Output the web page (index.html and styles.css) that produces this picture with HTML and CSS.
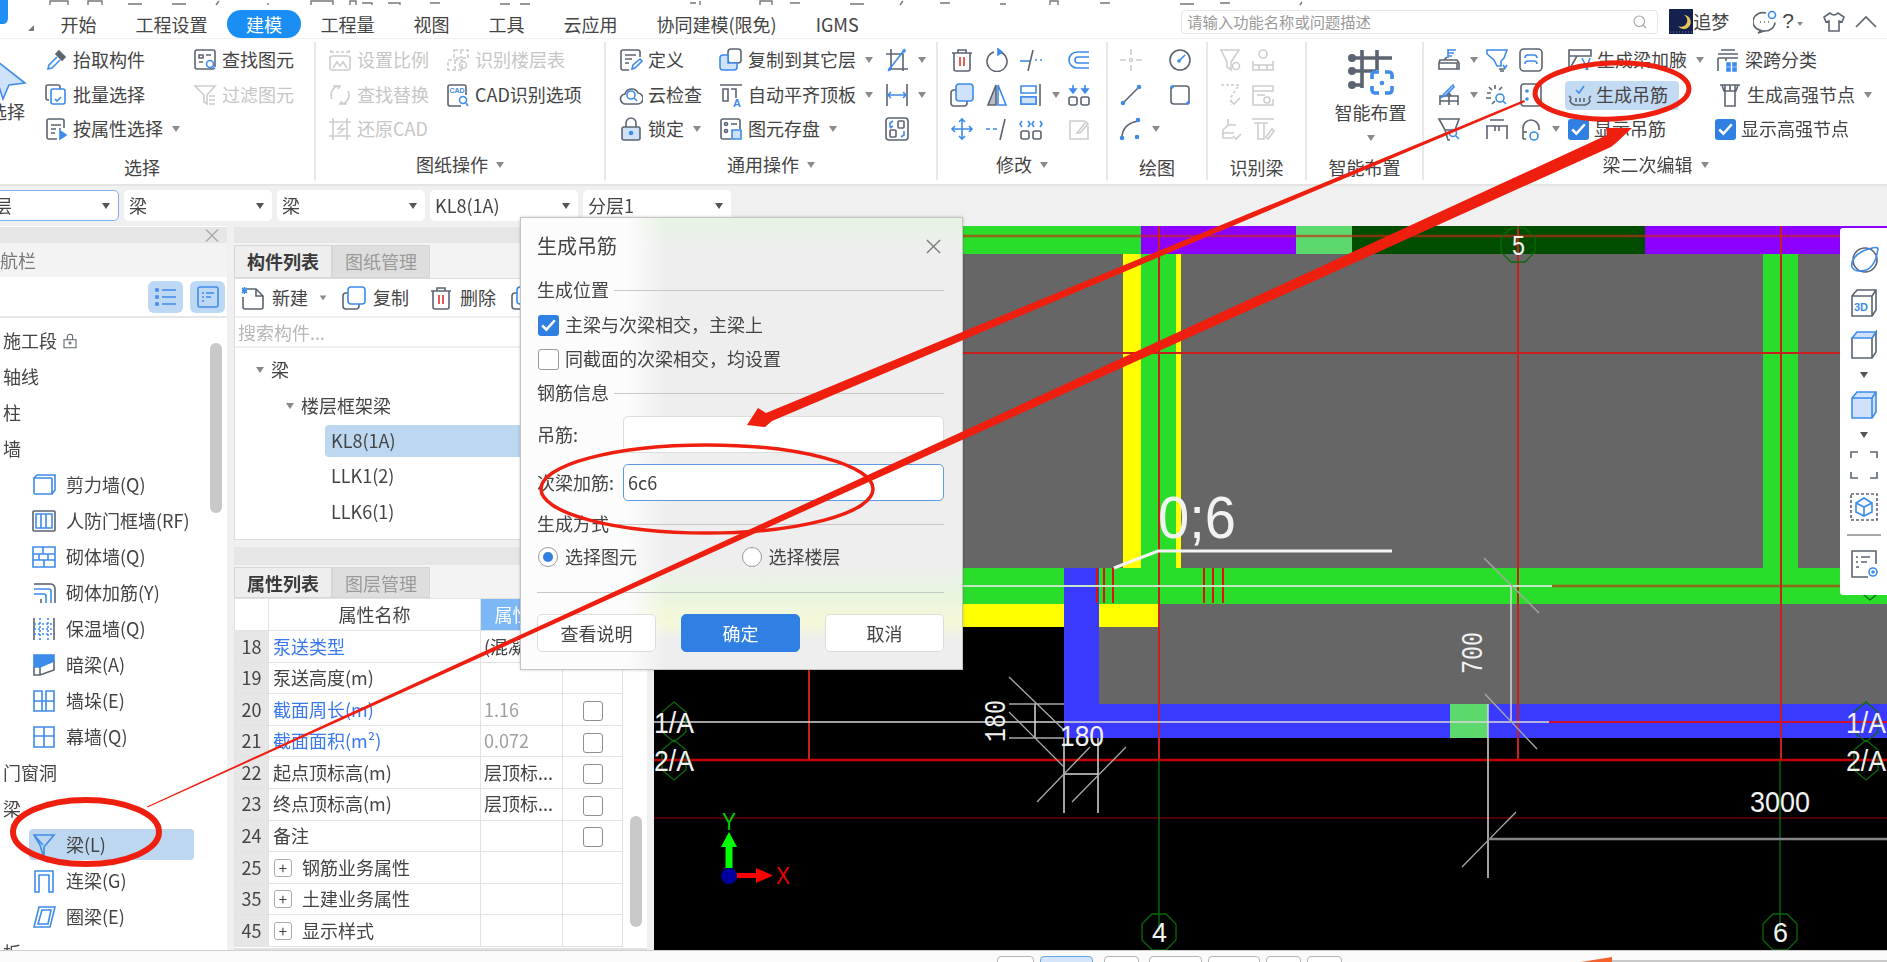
FILE: index.html
```html
<!DOCTYPE html>
<html lang="zh-CN">
<head>
    <meta charset="UTF-8">
    <meta name="viewport" content="width=device-width, initial-scale=1.0">
    <title>生成吊筋</title>
    <link rel="stylesheet" href="styles.css">
</head>
<body>
<div class="app">

    <!-- 标题栏（被截掉，只剩一点） -->
    <svg class="top-bits" viewBox="0 0 1887 6">
        <path d="M50 5V1h18v4M88 5V1h14v4M128 4h14M172 4h14M216 5l3-4M268 3v2M311 5V1h22v4M350 5V1h6v4M362 3h10v2M388 3h12v2M430 3h10M500 4h10M520 4h10M690 3h6M700 5V1M760 5V1h12v4M790 3h10M850 4h14M900 5l3-4M940 3h10M1000 4h6M1050 5V1h8v4M1100 3h10M1180 4h14M1220 3h10M1300 5l2-3"/>
    </svg>

    <div class="tabs">
        <svg class="logo" viewBox="0 0 8 24"><path d="M0 0h8v18q0 5-4 6H0z"/></svg>
        <i class="tab-corner"></i>
        <span class="tab">开始</span>
        <span class="tab">工程设置</span>
        <span class="tab active">建模</span>
        <span class="tab">工程量</span>
        <span class="tab">视图</span>
        <span class="tab">工具</span>
        <span class="tab">云应用</span>
        <span class="tab">协同建模(限免)</span>
        <span class="tab">IGMS</span>
        <div class="search">
            <span>请输入功能名称或问题描述</span>
            <svg class="ic search-ic" viewBox="0 0 24 24"><circle cx="11" cy="11" r="7"/><path d="M16 16l4 4"/></svg>
        </div>
        <svg class="avatar" viewBox="0 0 24 25"><rect width="24" height="25" fill="#14204e"/><path d="M15 6a7 7 0 1 1-6 11 6 6 0 0 0 6-11z" fill="#e8c65a"/><path d="M1 23h22" stroke="#6a7ab0" stroke-dasharray="1 2"/></svg>
        <span class="user">追梦</span>
        <svg class="ic top-ic" viewBox="0 0 24 24"><path d="M13 3.100A10 9 0 1 0 8 20.500L5 23l6-2.100a10 9 0 0 0 11-8.400"/><path d="M7 12h1M11 12h1M15 12h1"/><circle class="b" cx="19" cy="5" r="3.500"/></svg>
        <span class="help">?</span><i class="caret small"></i>
        <svg class="ic top-ic shirt" viewBox="0 0 24 24"><path d="M8 3L2 7l2 5 3-1v10h10V11l3 1 2-5-6-4q-4 4-8 0z"/></svg>
        <svg class="ic top-ic chev" viewBox="0 0 24 24"><path d="M2 17L12 7l10 10"/></svg>
    </div>

    <div class="ribbon">
        <div class="group g1">
            <div class="big">
                <svg class="ic big-arrow" viewBox="0 0 40 48"><path class="b lf" d="M2 2l36 28-16 2-6 14z"/></svg>
                <span>选择</span>
            </div>
            <div class="rb"><svg class="ic" viewBox="0 0 24 24"><path d="M15 3l6 6-3 3-6-6z" class="dk"/><path class="b" d="M13 9l-8 8-1 4 4-1 8-8"/></svg>抬取构件</div>
            <div class="rb"><svg class="ic" viewBox="0 0 24 24"><path d="M20 20v1H4a2 2 0 0 1-2-2V4a2 2 0 0 1 2-2h16a2 2 0 0 1 2 2v15"/><path d="M6 7h4v3H6zM13 7h5M6 14h4"/><circle class="b" cx="17" cy="16" r="3.500"/><path class="b" d="M20 19l2 2"/></svg>查找图元</div>
            <div class="rb"><svg class="ic" viewBox="0 0 24 24"><path d="M5 17H4a2 2 0 0 1-2-2V4a2 2 0 0 1 2-2h10a2 2 0 0 1 2 2v2"/><path class="b" d="M9 6h10a2 2 0 0 1 2 2v11a2 2 0 0 1-2 2H9a2 2 0 0 1-2-2V8a2 2 0 0 1 2-2zM11 16l2 2 4-4"/></svg>批量选择</div>
            <div class="rb off"><svg class="ic" viewBox="0 0 24 24"><path d="M2 3h20l-8 9v9l-3-2v-7zM16 13h6M16 17h6M16 21h6"/></svg>过滤图元</div>
            <div class="rb"><svg class="ic" viewBox="0 0 24 24"><path d="M20 11V4a2 2 0 0 0-2-2H5a2 2 0 0 0-2 2v16a2 2 0 0 0 2 2h8"/><path d="M7 8h10M7 12h5M7 16h4M15 12h2"/><path class="b bf" d="M16 14l6 4-6 4z"/></svg>按属性选择<i class="caret"></i></div>
            <div class="rb-label low">选择</div>
        </div>

        <div class="group g2">
            <div class="rb off"><svg class="ic" viewBox="0 0 24 24"><path d="M3 2v4M21 2v4M3 4h18" stroke-dasharray="3 2"/><rect x="2" y="8" width="20" height="14" rx="2"/><path d="M5 20l4-6 3 4 3-4 4 6"/></svg>设置比例</div>
            <div class="rb off"><svg class="ic" viewBox="0 0 24 24"><path d="M8 2h14v8H8zM15 2v8M2 12h14v10H2zM9 12v10" stroke-dasharray="4 2"/><circle cx="17" cy="17" r="3.500"/></svg>识别楼层表</div>
            <div class="rb off"><svg class="ic" viewBox="0 0 24 24"><path d="M12 3a9 9 0 0 0-8 13M12 21a9 9 0 0 0 8-13M5 3l7 0-2 3M19 21h-7l2-3" /></svg>查找替换</div>
            <div class="rb"><svg class="ic" viewBox="0 0 24 24"><path d="M20 12V4a2 2 0 0 0-2-2H4a2 2 0 0 0-2 2v17a2 2 0 0 0 2 2h11"/><text class="cad-txt" x="3.500" y="10">CAD</text><circle class="b" cx="17" cy="17" r="3.500"/><path class="b" d="M20 20l2 3"/></svg>CAD识别选项</div>
            <div class="rb off"><svg class="ic" viewBox="0 0 24 24"><path d="M5 1v22M19 1v22M1 5h22M1 19h22M15 7l-5 5h6l-6 5"/></svg>还原CAD</div>
            <div class="rb-label">图纸操作<i class="caret"></i></div>
        </div>

        <div class="group g3">
            <div class="rb"><svg class="ic" viewBox="0 0 24 24"><path d="M21 9V4a2 2 0 0 0-2-2H4a2 2 0 0 0-2 2v16a2 2 0 0 0 2 2h6"/><path d="M6 7h11M6 11h7M6 15h4"/><path class="b" d="M13 21l1-4 7-6 2 2-7 7z"/></svg>定义</div>
            <div class="rb"><svg class="ic" viewBox="0 0 24 24"><rect x="9" y="1" width="13" height="14" rx="3"/><path class="b lf" d="M4 7h5v8h9v4a3 3 0 0 1-3 3H4a3 3 0 0 1-3-3v-9a3 3 0 0 1 3-3z"/></svg>复制到其它层<i class="caret"></i></div>
            <div class="rb"><svg class="ic" viewBox="0 0 24 24"><path d="M6 1v20h17M1 6h17v17"/><path class="b" d="M3 23L20 1"/><circle class="b bf" cx="19" cy="3" r="1"/><circle class="b bf" cx="5" cy="21" r="1"/></svg><i class="caret"></i></div>

            <div class="rb"><svg class="ic" viewBox="0 0 24 24"><path d="M7 21a5 5 0 0 1-1-10 7 7 0 0 1 13-1 5.500 5.500 0 0 1-1 11z"/><circle class="b" cx="12" cy="12" r="4"/><path class="b" d="M15 15l3 3"/></svg>云检查</div>
            <div class="rb"><svg class="ic" viewBox="0 0 24 24"><path d="M1 2h22M4 6h5v12H4zM12 6h5v9"/><text class="a-txt" x="14" y="24">A</text></svg>自动平齐顶板<i class="caret"></i></div>
            <div class="rb"><svg class="ic" viewBox="0 0 24 24"><path d="M2 1v22M22 1v22"/><path class="b" d="M3 12h18M6 9l-3 3 3 3M18 9l3 3-3 3"/></svg><i class="caret"></i></div>

            <div class="rb"><svg class="ic" viewBox="0 0 24 24"><path d="M7 10V6a5 5 0 0 1 10 0v4"/><rect class="lf" x="3" y="10" width="18" height="13" rx="2"/><circle class="b bf" cx="12" cy="16" r="1.500"/></svg>锁定<i class="caret"></i></div>
            <div class="rb"><svg class="ic" viewBox="0 0 24 24"><path d="M21 12V4a2 2 0 0 0-2-2H4a2 2 0 0 0-2 2v16a2 2 0 0 0 2 2h8"/><circle cx="7" cy="7" r="1.500"/><circle cx="7" cy="14" r="1.500"/><path d="M12 7h6"/><path class="b lf" d="M13 13h9v9h-9z"/></svg>图元存盘<i class="caret"></i></div>
            <div class="rb"><svg class="ic" viewBox="0 0 24 24"><rect x="1" y="1" width="22" height="22" rx="3"/><rect x="13" y="4" width="6" height="7" rx="1"/><rect x="5" y="13" width="6" height="7" rx="1"/><path class="b" d="M5 10V6l3-2M8 9L5 11M19 14v4l-3 2"/></svg></div>
            <div class="rb-label">通用操作<i class="caret"></i></div>
        </div>

        <div class="group g4">
            <div class="rb"><svg class="ic" viewBox="0 0 24 24"><path d="M2 5h20M8 5V2h8v3M4 5v16a2 2 0 0 0 2 2h12a2 2 0 0 0 2-2V5"/><path class="r" d="M10 9v9M14 9v9"/></svg></div>
            <div class="rb"><svg class="ic" viewBox="0 0 24 24"><path d="M9 4a10 10 0 1 0 6 0"/><path class="b bf" d="M13 1l4 3-4 3z"/></svg></div>
            <div class="rb"><svg class="ic" viewBox="0 0 24 24"><path class="b" d="M1 13h11"/><path d="M14 2L9 23"/><path class="b" d="M16 12h2M21 12h2"/></svg></div>
            <div class="rb"><svg class="ic" viewBox="0 0 24 24"><path class="b" d="M22 4H10a8 8 0 0 0 0 16h12M22 9H11a3 3 0 0 0 0 6h11"/></svg></div>

            <div class="rb"><svg class="ic" viewBox="0 0 24 24"><path d="M6 7H4a3 3 0 0 0-3 3v10a3 3 0 0 0 3 3h10a3 3 0 0 0 3-3v-2"/><rect class="b lf" x="6" y="1" width="17" height="17" rx="3"/></svg></div>
            <div class="rb"><svg class="ic" viewBox="0 0 24 24"><path d="M11 2L3 22h8z" class="gf"/><path class="b" d="M13 2l8 20h-8z"/></svg></div>
            <div class="rb"><svg class="ic" viewBox="0 0 24 24"><path class="b" d="M2 3h15v7H2zM2 14h15v7H2z"/><path class="b lf" d="M2 14h15v7H2z"/><path d="M21 1v22"/></svg><i class="caret"></i></div>
            <div class="rb"><svg class="ic" viewBox="0 0 24 24"><rect x="2" y="14" width="8" height="8" rx="2"/><rect x="14" y="14" width="8" height="8" rx="2"/><path class="b" d="M6 2v8M18 2v8"/><path class="b bf" d="M3 6l3 4 3-4zM15 6l3 4 3-4z"/></svg></div>

            <div class="rb"><svg class="ic" viewBox="0 0 24 24"><path class="b" d="M12 2v20M2 12h20M9 5l3-3 3 3M9 19l3 3 3-3M5 9l-3 3 3 3M19 9l3 3-3 3"/></svg></div>
            <div class="rb"><svg class="ic" viewBox="0 0 24 24"><path class="b" d="M1 12h4M8 12h4"/><path d="M20 2l-5 21"/></svg></div>
            <div class="rb"><svg class="ic" viewBox="0 0 24 24"><rect x="2" y="14" width="8" height="8" rx="2"/><rect x="14" y="14" width="8" height="8" rx="2"/><path class="b" d="M3 4l-2 3 2 3M9 4l2 3-2 3M15 4l-2 3 2 3M21 4l2 3-2 3"/></svg></div>
            <div class="rb off"><svg class="ic" viewBox="0 0 24 24"><path d="M18 4H3v18h18V9M10 16l9-11 2 2-8 9z"/></svg></div>
            <div class="rb-label">修改<i class="caret"></i></div>
        </div>

        <div class="group g5">
            <div class="rb off"><svg class="ic" viewBox="0 0 24 24"><path d="M12 1v6M12 17v6M1 12h6M17 12h6"/><circle cx="12" cy="12" r="1.500"/></svg></div>
            <div class="rb"><svg class="ic" viewBox="0 0 24 24"><circle cx="12" cy="12" r="10"/><path class="b" d="M11 13l6-6"/><circle class="b bf" cx="11" cy="13" r="1"/></svg></div>
            <div class="rb"><svg class="ic" viewBox="0 0 24 24"><path d="M4 20L20 4"/><circle class="b bf" cx="20" cy="4" r="1.500"/><circle class="b bf" cx="4" cy="20" r="1.500"/></svg></div>
            <div class="rb"><svg class="ic" viewBox="0 0 24 24"><rect x="3" y="3" width="18" height="18" rx="3"/><circle class="b bf" cx="4" cy="4" r="1"/><circle class="b bf" cx="20" cy="20" r="1"/></svg></div>
            <div class="rb"><svg class="ic" viewBox="0 0 24 24"><path d="M3 21q0-14 16-17"/><circle class="b bf" cx="19" cy="3" r="1.500"/><circle class="b bf" cx="3" cy="21" r="1.500"/><circle class="b bf" cx="18" cy="20" r="1.500"/></svg><i class="caret"></i></div>
            <div class="rb-label low">绘图</div>
        </div>

        <div class="group g6">
            <div class="rb off"><svg class="ic" viewBox="0 0 24 24"><path d="M2 2h18l-8 12v8l-4-3v-5z"/><circle cx="17" cy="18" r="3.500"/></svg></div>
            <div class="rb off"><svg class="ic" viewBox="0 0 24 24"><path d="M2 13v9h20v-9M2 17h20M8 17v5M16 17v5"/><circle cx="12" cy="6" r="4"/></svg></div>
            <div class="rb off"><svg class="ic" viewBox="0 0 24 24"><path d="M2 2h18l-8 12v8" stroke-dasharray="3 2"/><path d="M12 18l3 3 6-6"/></svg></div>
            <div class="rb off"><svg class="ic" viewBox="0 0 24 24"><path d="M2 3h20v5H2zM2 8v14h20v-6M6 12h8"/><circle cx="16" cy="17" r="3"/></svg></div>
            <div class="rb off"><svg class="ic" viewBox="0 0 24 24"><path d="M9 2v6h8M9 8L4 13v8h10M3 16h12M14 19l3 3 5-5"/></svg></div>
            <div class="rb off"><svg class="ic" viewBox="0 0 24 24"><path d="M1 2h22M3 6h14M7 6v16h6V6M15 20l6-8 2 2-6 8z"/></svg></div>
            <div class="rb-label low">识别梁</div>
        </div>

        <div class="group g7">
            <div class="big">
                <svg class="ic smart" viewBox="0 0 48 48"><path class="thick" d="M15 2v38M30 2v20M3 10h42M3 23h26M3 37h13"/><circle class="solid" cx="5" cy="10" r="4"/><circle class="solid" cx="5" cy="23" r="4"/><circle class="solid" cx="5" cy="37" r="4"/><path class="b thick" d="M25 31v-4a3 3 0 0 1 3-3h4M38 24h4a3 3 0 0 1 3 3v4M45 38v4a3 3 0 0 1-3 3h-4M32 45h-4a3 3 0 0 1-3-3v-4"/><circle class="b bf" cx="35" cy="35" r="1.500"/></svg>
                <span>智能布置</span>
                <i class="caret big-caret"></i>
            </div>
            <div class="rb-label low">智能布置</div>
        </div>

        <div class="group g8">
            <div class="rb"><svg class="ic" viewBox="0 0 24 24"><path d="M3 12h17l2 3v6H2v-6zM7 12l3-3M20 21v-6H2"/><path class="b" d="M11 1v9M11 2h8M11 5h6M11 8h4"/></svg><i class="caret"></i></div>
            <div class="rb"><svg class="ic" viewBox="0 0 24 24"><path class="b" d="M2 2h20l-3 8-3 3v5h-4l-3-6-7-6z"/><path d="M14 21h6M15 23h4"/><path class="b" d="M18 17l2 3 2-3"/></svg></div>
            <div class="rb"><svg class="ic" viewBox="0 0 24 24"><rect x="1" y="1" width="22" height="22" rx="4"/><path class="b" d="M6 10q0-3 3-3h6q3 0 3 3M6 16q0-3 3-3h6q3 0 3 3" /></svg></div>
            <div class="rb"><svg class="ic" viewBox="0 0 24 24"><path d="M1 2h22v6H1zM1 8v14M9 8L1 22"/><path class="b" d="M14 10l6 12M22 10l-4 12"/></svg>生成梁加腋<i class="caret"></i></div>
            <div class="rb"><svg class="ic" viewBox="0 0 24 24"><path d="M5 2h14M2 6h20M2 10h20M2 10v13M10 10v3"/><path class="b bf" d="M11 15h3v3h-3zM17 15h3v3h-3zM11 20h3v3h-3zM17 20h3v3h-3z"/></svg>梁跨分类</div>

            <div class="rb"><svg class="ic" viewBox="0 0 24 24"><path d="M3 22v-9h18v9M12 13v9M3 18h18M10 13l2-3 2 3"/><path class="b" d="M16 2l-9 9-2 3 3-1 9-9z"/></svg><i class="caret"></i></div>
            <div class="rb"><svg class="ic" viewBox="0 0 24 24"><path d="M10 2v4M2 10h4M4 4l3 3M17 4l-3 3M1 15h5M7 21l3-3"/><circle class="b" cx="15" cy="15" r="4"/><path class="b" d="M18 18l3 3"/></svg></div>
            <div class="rb"><svg class="ic" viewBox="0 0 24 24"><rect x="2" y="1" width="20" height="22" rx="3"/><circle class="b bf" cx="8" cy="8" r="1"/><circle class="b bf" cx="8" cy="16" r="1"/><path class="b" d="M15 8h4M15 16h4"/></svg></div>
            <div class="rb active"><svg class="ic" viewBox="0 0 24 24"><path class="b" d="M8 7l3 3 5-7"/><path d="M1 13q3 2 1 5 1 3 5 4h10q4-1 5-4-2-3 1-5M8 15v4M12 15v4M16 15v4"/></svg>生成吊筋</div>
            <div class="rb gh"><svg class="ic" viewBox="0 0 24 24"><path d="M2 2h20M4 2l2 6h12l2-6M7 8v15h10V8M7 2v6M12 2v6M17 2v6"/></svg>生成高强节点<i class="caret"></i></div>

            <div class="rb"><svg class="ic" viewBox="0 0 24 24"><path d="M2 2h20l-4 11H8zM8 13l3 10h2"/><circle class="b" cx="16" cy="16" r="3.500"/><path class="b" d="M19 19l3 3"/></svg></div>
            <div class="rb"><svg class="ic" viewBox="0 0 24 24"><path d="M5 3h14M1 9h22M2 9v13M22 9v13M10 9v5M14 9v5"/></svg></div>
            <div class="rb"><svg class="ic" viewBox="0 0 24 24"><path d="M4 22V11a8 8 0 0 1 16 0v2M4 15h4M4 22h3"/><circle class="b" cx="15" cy="19" r="4"/></svg><i class="caret"></i></div>
            <div class="rb"><span class="cb"><svg viewBox="0 0 20 20"><path d="M4 10l4 4 8-9"/></svg></span>显示吊筋</div>
            <div class="rb cb-rb"><span class="cb"><svg viewBox="0 0 20 20"><path d="M4 10l4 4 8-9"/></svg></span>显示高强节点</div>
            <div class="rb-label">梁二次编辑<i class="caret"></i></div>
        </div>
    </div>

    <div class="selects">
        <div class="sel first">首层<i class="caret"></i></div>
        <div class="sel">梁<i class="caret"></i></div>
        <div class="sel">梁<i class="caret"></i></div>
        <div class="sel">KL8(1A)<i class="caret"></i></div>
        <div class="sel">分层1<i class="caret"></i></div>
    </div>

    <div class="main">
        <!-- 导航栏 -->
        <div class="nav">
            <div class="title-strip"><span class="x">×</span></div>
            <div class="nav-head">导航栏</div>
            <div class="nav-tools">
                <span class="tool-btn"><svg class="ic" viewBox="0 0 24 24"><path class="b" d="M8 5h14M8 12h14M8 19h14M2 4h2v2H2zM2 11h2v2H2zM2 18h2v2H2z"/></svg></span>
                <span class="tool-btn"><svg class="ic" viewBox="0 0 24 24"><rect class="b" x="2" y="2" width="20" height="20" rx="2"/><path class="b" d="M6 8h2M10 8h8M6 12h2M10 12h5M6 16h2"/></svg></span>
            </div>
            <div class="nav-list">
                <div class="n1">施工段 <svg class="ic lock" viewBox="0 0 24 24"><path d="M8 10V6a4 4 0 0 1 8 0v4M3 10h18v12H3z"/><circle cx="12" cy="15" r="1.500"/></svg></div>
                <div class="n1">轴线</div>
                <div class="n1">柱</div>
                <div class="n1">墙</div>
                <div class="n2"><svg class="ic" viewBox="0 0 24 24"><path class="b" d="M2 5h17a1 1 0 0 1 1 1v15H3a1 1 0 0 1-1-1zM2 5l3-3h18v15l-3 4"/></svg>剪力墙(Q)</div>
                <div class="n2"><svg class="ic" viewBox="0 0 24 24"><rect x="1" y="2" width="22" height="20" rx="1"/><path class="b" d="M4 5h16v14H4zM9 5v14M14 5v14"/></svg>人防门框墙(RF)</div>
                <div class="n2"><svg class="ic" viewBox="0 0 24 24"><path class="b" d="M1 2h22v20H1zM1 9h22M1 15h22M11 2v7M7 9v6M16 9v6M12 15v7"/></svg>砌体墙(Q)</div>
                <div class="n2"><svg class="ic" viewBox="0 0 24 24"><path d="M2 3h16"/><path class="b" d="M2 8h15a2 2 0 0 1 2 2v12M2 13h10a2 2 0 0 1 2 2v7"/><path d="M23 22V8q0-5-5-5M9 22v-4"/></svg>砌体加筋(Y)</div>
                <div class="n2"><svg class="ic" viewBox="0 0 24 24"><path d="M2 1v22M22 1v22"/><path class="b" d="M8 1v22M16 1v22M2 7h20M2 12h20M2 17h20" stroke-dasharray="2 2"/></svg>保温墙(Q)</div>
                <div class="n2"><svg class="ic" viewBox="0 0 24 24"><path d="M2 14v8h6l14-5V8M8 14v8"/><path class="bf b" d="M2 2h20v6L8 14H2z"/></svg>暗梁(A)</div>
                <div class="n2"><svg class="ic" viewBox="0 0 24 24"><path class="b" d="M2 2h8v10h4V2h8v20H2zM2 12h8M14 12h8M10 12v10M14 12v10"/></svg>墙垛(E)</div>
                <div class="n2"><svg class="ic" viewBox="0 0 24 24"><path class="b" d="M2 2h20v20H2zM12 2v20M2 11h20"/></svg>幕墙(Q)</div>
                <div class="n1">门窗洞</div>
                <div class="n1">梁</div>
                <div class="n2 selected"><svg class="ic" viewBox="0 0 24 24"><path class="b" d="M2 2h20L12 14v8h-1L8 12zM2 2l9 10"/></svg>梁(L)</div>
                <div class="n2"><svg class="ic" viewBox="0 0 24 24"><path class="b" d="M3 23V2h18v21h-4V6H7v17z"/></svg>连梁(G)</div>
                <div class="n2"><svg class="ic" viewBox="0 0 24 24"><path class="b" d="M7 2h16l-5 20H2zM10 5h9l-3 14H6z"/></svg>圈梁(E)</div>
                <div class="n1">板</div>
                <span class="nav-scroll"></span>
            </div>
        </div>

        <div class="mid">
            <div class="title-strip"></div>
            <div class="ptabs"><span class="ptab on">构件列表</span><span class="ptab">图纸管理</span></div>
            <div class="comp">
                <div class="comp-tools">
                    <svg class="ic" viewBox="0 0 24 24"><path d="M6 3h9l7 7v11a2 2 0 0 1-2 2H4a2 2 0 0 1-2-2V11M15 3v7h7"/><path class="b" d="M1 2l5 5M6 2L1 7M3.500 1v7M1 4.500h5"/></svg>
                    <span>新建</span><i class="caret"></i>
                    <svg class="ic copy" viewBox="0 0 24 24"><path d="M6 7H4a3 3 0 0 0-3 3v10a3 3 0 0 0 3 3h10a3 3 0 0 0 3-3v-2"/><rect class="b" x="6" y="1" width="17" height="17" rx="3"/></svg>
                    <span>复制</span>
                    <svg class="ic copy del" viewBox="0 0 24 24"><path d="M2 5h20M8 5V2h8v3M4 5v16a2 2 0 0 0 2 2h12a2 2 0 0 0 2-2V5"/><path class="r" d="M10 9v9M14 9v9"/></svg>
                    <span>删除</span>
                    <svg class="ic copy" viewBox="0 0 24 24"><path d="M6 7H4a3 3 0 0 0-3 3v10a3 3 0 0 0 3 3h10"/><rect class="b" x="6" y="1" width="17" height="17" rx="3"/></svg>
                </div>
                <div class="comp-search">搜索构件...</div>
                <div class="tree">
                    <div class="t1"><i class="caret tc"></i>梁</div>
                    <div class="t2"><i class="caret tc"></i>楼层框架梁</div>
                    <div class="t3 on">KL8(1A)</div>
                    <div class="t3">LLK1(2)</div>
                    <div class="t3">LLK6(1)</div>
                </div>
            </div>
            <div class="title-strip second"></div>
            <div class="ptabs short"><span class="ptab on">属性列表</span><span class="ptab">图层管理</span></div>
            <div class="props">
                <table class="prop-table">
                    <colgroup><col class="c0"><col class="c1"><col class="c2"><col class="c3"></colgroup>
                    <tr class="phead"><th></th><th>属性名称</th><th class="pval">属性值</th><th></th></tr>
                    <tr><td class="num">18</td><td class="link">泵送类型</td><td>(混凝土...</td><td></td></tr>
                    <tr><td class="num">19</td><td>泵送高度(m)</td><td></td><td></td></tr>
                    <tr><td class="num">20</td><td class="link">截面周长(m)</td><td class="gray">1.16</td><td><span class="chk"></span></td></tr>
                    <tr><td class="num">21</td><td class="link">截面面积(m²)</td><td class="gray">0.072</td><td><span class="chk"></span></td></tr>
                    <tr><td class="num">22</td><td>起点顶标高(m)</td><td>层顶标...</td><td><span class="chk"></span></td></tr>
                    <tr><td class="num">23</td><td>终点顶标高(m)</td><td>层顶标...</td><td><span class="chk"></span></td></tr>
                    <tr><td class="num">24</td><td>备注</td><td></td><td><span class="chk"></span></td></tr>
                    <tr><td class="num">25</td><td><span class="plus">+</span>钢筋业务属性</td><td></td><td></td></tr>
                    <tr><td class="num">35</td><td><span class="plus">+</span>土建业务属性</td><td></td><td></td></tr>
                    <tr><td class="num">45</td><td><span class="plus">+</span>显示样式</td><td></td><td></td></tr>
                </table>
                <span class="prop-scroll"></span>
            </div>
        </div>

        <!-- 绘图区 -->
        <svg class="canvas" viewBox="654 226 1233 724">
            <rect x="654" y="226" width="1233" height="724" fill="#000"/>
            <rect x="654" y="254" width="1233" height="314" fill="#666"/>
            <rect x="1098" y="604" width="789" height="100" fill="#666"/>
            <!-- 顶部梁 -->
            <rect x="654" y="226" width="487" height="28" fill="#2bdd2b"/>
            <rect x="1141" y="226" width="155" height="28" fill="#8b00ff"/>
            <rect x="1296" y="226" width="56" height="28" fill="#5dd86d"/>
            <rect x="1352" y="226" width="293" height="28" fill="#004d00"/>
            <rect x="1645" y="226" width="242" height="28" fill="#8b00ff"/>
            <!-- 竖向梁 -->
            <rect x="1123" y="254" width="18" height="314" fill="#ff0"/>
            <rect x="1141" y="254" width="35" height="314" fill="#2bdd2b"/>
            <rect x="1176" y="254" width="5" height="314" fill="#ff0"/>
            <rect x="1763" y="254" width="35" height="314" fill="#2bdd2b"/>
            <!-- 横向梁 -->
            <rect x="654" y="568" width="1233" height="36" fill="#2bdd2b"/>
            <rect x="654" y="604" width="505" height="23" fill="#ff0"/>
            <rect x="1064" y="704" width="823" height="34" fill="#3a3aff"/>
            <rect x="1064" y="568" width="35" height="170" fill="#3a3aff"/>
            <rect x="1450" y="704" width="38" height="34" fill="#5dd86d"/>
            <!-- 红色轴线 -->
            <path class="ln-red" d="M654 353H1887M1159 226V760M1518 226V760M1781 226V760M809 670V760"/>
            <path class="ln-band" d="M654 236H1887M1552 586H1887"/>
            <path class="ln-red2" d="M1549 722H1887"/>
            <path class="ln-red3" d="M654 760H1887"/>
            <path class="ln-dark" d="M654 818H1887"/>
            <path class="ln-rebar" d="M1097 568V603M1104 568V603M1113 568V603M1204 568V603M1213 568V603M1223 568V603"/>
            <path class="ln-green" d="M1159 760V932M1780 760V932"/>
            <!-- 标注 -->
            <path class="ln-lead" d="M1114 568L1158 551H1392"/>
            <path class="ln-soft" d="M654 586H1552"/>
            <path class="ln-white" d="M654 722H1549M1511 586V722M1488 704V878M1064 738V813M1098 738V813M1064 774H1098M1035 704V738"/>
            <path class="ln-gray" d="M1484 558L1539 613M1485 694L1537 749M1009 677L1064 730M1009 712L1064 767M1037 802L1090 747M1072 802L1126 747M1462 867L1516 812M1009 704H1064M1009 738H1064"/>
            <path class="ln-dim" d="M1488 839H1887"/>
            <text class="cad" x="1158" y="538" font-size="60" textLength="78" lengthAdjust="spacingAndGlyphs">0;6</text>
            <text class="cad mono" font-size="30" textLength="42" lengthAdjust="spacingAndGlyphs" transform="translate(1482 674) rotate(-90)">700</text>
            <text class="cad mono" font-size="30" textLength="42" lengthAdjust="spacingAndGlyphs" transform="translate(1005 742) rotate(-90)">180</text>
            <text class="cad" x="1060" y="746" font-size="29" textLength="44" lengthAdjust="spacingAndGlyphs">180</text>
            <text class="cad" x="1750" y="812" font-size="30" textLength="60" lengthAdjust="spacingAndGlyphs">3000</text>
            <!-- 轴号 -->
            <polygon class="axis" points="1511,228 1525,228 1535,238 1535,252 1525,262 1511,262 1501,252 1501,238"/>
            <polygon class="axis" points="1152,914 1166,914 1176,924 1176,940 1166,950 1152,950 1142,940 1142,924"/>
            <polygon class="axis" points="1773,914 1787,914 1797,924 1797,940 1787,950 1773,950 1763,940 1763,924"/>
            <polygon class="axis" points="674,702 686,712 686,732 674,742 662,732 662,712"/>
            <polygon class="axis" points="674,740 686,750 686,770 674,780 662,770 662,750"/>
            <polygon class="axis" points="1866,702 1878,712 1878,732 1866,742 1854,732 1854,712"/>
            <polygon class="axis" points="1866,740 1878,750 1878,770 1866,780 1854,770 1854,750"/>
            <polygon class="axis" points="1870,560 1882,570 1882,590 1870,600 1858,590 1858,570"/>
            <text class="cad" x="1512" y="255" font-size="28" textLength="13" lengthAdjust="spacingAndGlyphs">5</text>
            <text class="cad" x="1152" y="942" font-size="28" textLength="15" lengthAdjust="spacingAndGlyphs">4</text>
            <text class="cad" x="1773" y="942" font-size="28" textLength="15" lengthAdjust="spacingAndGlyphs">6</text>
            <text class="cad" x="654" y="733" font-size="30" textLength="40" lengthAdjust="spacingAndGlyphs">1/A</text>
            <text class="cad" x="654" y="771" font-size="30" textLength="40" lengthAdjust="spacingAndGlyphs">2/A</text>
            <text class="cad" x="1846" y="733" font-size="30" textLength="40" lengthAdjust="spacingAndGlyphs">1/A</text>
            <text class="cad" x="1846" y="771" font-size="30" textLength="40" lengthAdjust="spacingAndGlyphs">2/A</text>
            <!-- 坐标系 -->
            <path class="ax-y" d="M725.500 868V847H721l8-15 8 15h-4.500V868z"/>
            <path class="ax-x" d="M737 873h19v-5l17 7.500-17 7.500v-5h-19z"/>
            <ellipse cx="729" cy="876" rx="8" ry="8" fill="#00009c"/>
            <text class="axis-y" x="722" y="830" font-size="23" textLength="14" lengthAdjust="spacingAndGlyphs">Y</text>
            <text class="axis-x" x="776" y="884" font-size="23" textLength="14" lengthAdjust="spacingAndGlyphs">X</text>
        </svg>

        <div class="view-tools">
            <svg class="ic" viewBox="0 0 30 30"><circle cx="16" cy="14" r="12"/><path class="b" d="M3 21Q1 12 14 5q12-5 15-3M3 21q3 6 14 3 10-4 12-22"/></svg>
            <svg class="ic" viewBox="0 0 30 30"><path d="M3 8h20v20H3zM3 8l5-6h19v20l-4 6M23 8l4-6"/><text class="d3" x="5" y="23">3D</text></svg>
            <svg class="ic" viewBox="0 0 30 30"><path d="M3 8v20h20V8l4-6v20l-4 6"/><path class="b lf" d="M3 8l5-6h19l-4 6z"/></svg>
            <i class="caret vt"></i>
            <svg class="ic" viewBox="0 0 30 30"><path class="b lf" d="M3 8h20v20H3zM3 8l5-6h19v20l-4 6M23 8l4-6"/></svg>
            <i class="caret vt"></i>
            <svg class="ic" viewBox="0 0 30 30"><path d="M2 8V2h7M21 2h7v6M28 22v6h-7M9 28H2v-6"/></svg>
            <svg class="ic" viewBox="0 0 30 30"><path d="M2 2h26v26H2z" stroke-dasharray="3 2"/><path class="b" d="M15 6l8 5v9l-8 4-8-4v-9zM7 11l8 4 8-4M15 15v9"/></svg>
            <span class="vt-sep"></span>
            <svg class="ic" viewBox="0 0 30 30"><path d="M27 16V3H3v26h16"/><path d="M7 9h2M12 9h9M7 14h2M12 14h6M7 19h3"/><circle class="b" cx="24" cy="24" r="4"/><circle class="b bf" cx="24" cy="24" r="1"/></svg>
        </div>
    </div>

    <div class="status">
        <span class="st-btn w37"></span>
        <span class="st-btn w53 on"></span>
        <span class="st-btn w35 gap1"></span>
        <span class="st-btn w53 gap1"></span>
        <span class="st-btn w52"></span>
        <span class="st-btn w35"></span>
        <span class="st-btn w35"></span>
    </div>

    <!-- 弹窗 -->
    <div class="dialog">
        <div class="dlg-head"><span>生成吊筋</span><svg class="dlg-close" viewBox="0 0 16 16"><path d="M1 1l14 14M15 1L1 15"/></svg></div>
        <div class="dlg-sec">生成位置</div>
        <label class="dlg-row first"><span class="cb"><svg viewBox="0 0 20 20"><path d="M4 10l4 4 8-9"/></svg></span>主梁与次梁相交，主梁上</label>
        <label class="dlg-row"><span class="cb empty"></span>同截面的次梁相交，均设置</label>
        <div class="dlg-sec s2">钢筋信息</div>
        <div class="dlg-field"><span>吊筋:</span><div class="inp"></div></div>
        <div class="dlg-field"><span>次梁加筋:</span><div class="inp focus">6c6</div></div>
        <div class="dlg-sec s3">生成方式</div>
        <div class="dlg-radios">
            <label class="radio"><span class="rd on"></span>选择图元</label>
            <label class="radio"><span class="rd"></span>选择楼层</label>
        </div>
        <div class="dlg-line"></div>
        <div class="dlg-btns">
            <span class="btn">查看说明</span>
            <span class="btn primary">确定</span>
            <span class="btn">取消</span>
        </div>
    </div>

    <!-- 截图上的红色批注 -->
    <svg class="marks" viewBox="0 0 1887 962">
        <ellipse class="mk t5" cx="1612" cy="91" rx="77" ry="28" transform="rotate(-2 1612 91)"/>
        <ellipse class="mk t4" cx="707" cy="489" rx="166" ry="44"/>
        <ellipse class="mk t6" cx="86" cy="832" rx="73" ry="32"/>
        <polygon class="mkf" points="1524,100 1525,102 772,421 765,427 747,425 758,408 766,413"/>
        <polygon class="mkf" points="147,806.500 147.500,807.500 1611,147 1616,143 1632,128 1606,128 1607,135"/>
        <polygon class="mk-orange" points="1581,962 1612,957 1612,962"/>
        <path class="mk-line" d="M1612 961H1887"/>
    </svg>
</div>
</body>
</html>
```

FILE: styles.css
```css
* {
    margin: 0;
    padding: 0;
    box-sizing: border-box;
}
html, body {
    width: 1887px;
    height: 962px;
    overflow: hidden;
    background-color: #f0f0f0;
}
body {
    font-family: "Noto Sans CJK SC", "Noto Sans", sans-serif;
    font-size: 18px;
    line-height: 1.2;
    color: #444;
}
.app {
    position: relative;
    width: 1887px;
    height: 962px;
    overflow: hidden;
    filter: blur(0.45px);
}

/* icons */
.ic {
    width: 24px;
    height: 24px;
    flex: none;
    fill: none;
    stroke: #5b6470;
    stroke-width: 1.6;
}
.ic .b { stroke: #3d8bea; }
.ic .r { stroke: #e0352b; }
.ic .lf { fill: #cfe2fa; }
.ic .bf { fill: #3d8bea; }
.ic .gf { fill: #b9bec6; }
.ic .dk { fill: #5b6470; }
.ic .solid { fill: #5b6470; stroke: none; }
.ic .thick { stroke-width: 3.6; }
.ic text { stroke: none; font-family: "Liberation Sans", sans-serif; font-weight: bold; fill: #3d8bea; }
.cad-txt { font-size: 7px; }
.a-txt { font-size: 11px; }
.d3 { font-size: 11px; }
.caret {
    display: inline-block;
    width: 0;
    height: 0;
    border-left: 4px solid transparent;
    border-right: 4px solid transparent;
    border-top: 6px solid #8a8a8a;
    flex: none;
}
.caret.small {
    border-left-width: 3px;
    border-right-width: 3px;
    border-top-width: 4px;
    margin-left: 3px;
}

/* title + tabs */
.top-bits {
    display: block;
    width: 1887px;
    height: 6px;
    fill: none;
    stroke: #777;
    stroke-width: 1.4;
    background-color: #fff;
}
.tabs {
    display: flex;
    align-items: center;
    height: 33px;
    padding-top: 4px;
    background-color: #fff;
    border-bottom: 1px solid #f0f0f0;
}
.logo {
    align-self: flex-start;
    flex: none;
    width: 8px;
    height: 24px;
    margin-top: -10px;
    fill: #1f8ff5;
}
.tab-corner {
    flex: none;
    width: 0;
    height: 0;
    margin: 8px 7px 0 20px;
    border-left: 6px solid transparent;
    border-bottom: 6px solid #777;
}
.tab {
    flex: none;
    height: 28px;
    padding: 0 19.5px;
    line-height: 28px;
    white-space: nowrap;
}
.tab.active {
    padding: 0 19px;
    color: #fff;
    background-color: #1b8ef6;
    border-radius: 14px;
}
.search {
    display: flex;
    align-items: center;
    justify-content: space-between;
    flex: none;
    width: 477px;
    height: 24px;
    margin-left: auto;
    padding: 0 8px 0 5px;
    margin-top: -5px;
    font-size: 15.300px;
    color: #9a9a9a;
    border: 1px solid #e6e6e6;
    border-radius: 4px;
}
.search-ic {
    width: 18px;
    height: 18px;
    stroke: #aaa;
}
.avatar {
    flex: none;
    width: 24px;
    height: 25px;
    margin-left: 11px;
    margin-top: -5px;
}
.user { margin-right: 24px; margin-top: -5px; }
.top-ic {
    margin-top: -5px;
}
.help { margin-left: 5px; font-size: 21px; margin-top: -7px; font-family: "Liberation Sans", sans-serif; }
.shirt { margin-left: 19px; }
.chev { margin-left: 8px; margin-right: 9px; }

/* ribbon */
.ribbon {
    display: flex;
    align-items: flex-start;
    height: 147px;
    padding-top: 3px;
    background-color: #fff;
    border-bottom: 2px solid #e4e4e4;
}
.group {
    display: grid;
    flex: none;
    height: 138px;
    padding-top: 1px;
    grid-template-rows: 34.500px 34.500px 34.500px 1fr;
    border-right: 2px solid #e8e8e8;
}
.g1 { width: 346px; margin-left: -30px; grid-template-columns: 74px 149px 1fr; }
.g2 { width: 290px; padding-left: 12px; grid-template-columns: 118px 1fr; }
.g3 { width: 332px; padding-left: 13px; grid-template-columns: 100px 166px 1fr; }
.g4 { width: 170px; padding-left: 12px; grid-template-columns: 34.500px 34.500px 47.500px 1fr; }
.g5 { width: 100px; padding-left: 11px; grid-template-columns: 49px 1fr; }
.g6 { width: 99px; padding-left: 11px; grid-template-columns: 32px 1fr; }
.g7 { width: 117px; padding-left: 12px; grid-template-columns: 1fr; }
.g8 { width: 463px; padding-left: 13px; border-right: 0; grid-template-columns: 48px 34px 49px 148px 1fr; }
.rb {
    display: flex;
    align-items: center;
    gap: 5px;
    white-space: nowrap;
}
.rb .caret { margin-left: 4px; }
.rb.off { color: #c6c6c6; }
.rb.off .ic, .rb.off .ic .b { stroke: #cdcdcd; }
.rb.active {
    width: 114px;
    height: 29px;
    margin: 3px 0 0 -3px;
    padding-left: 3px;
    gap: 4px;
    background-color: #c3daf3;
    border-radius: 4px;
}
.rb.gh { margin-left: 2px; }
.rb.cb-rb { margin-left: -1px; }
.rb-label {
    grid-column: 1 / -1;
    align-self: center;
    display: flex;
    align-items: center;
    justify-content: center;
    gap: 8px;
    padding-top: 4px;
}
.rb-label.low { padding-top: 9px; }
.g2 .rb-label { margin-left: -12px; }
.g3 .rb-label { margin-left: -13px; }
.g4 .rb-label { margin-left: -12px; }
.g5 .rb-label, .g6 .rb-label { margin-left: -11px; }
.g7 .rb-label { margin-left: -12px; }
.g8 .rb-label { margin-left: -13px; }
.big {
    grid-row: 1 / 4;
    display: flex;
    flex-direction: column;
    align-items: center;
    padding-top: 10px;
    white-space: nowrap;
}
.big-arrow {
    width: 40px;
    height: 48px;
}
.g7 .big { padding-top: 5px; }
.smart {
    width: 48px;
    height: 48px;
    margin-bottom: 6px;
}
.big-caret { margin-top: 11px; }
.cb {
    display: inline-block;
    flex: none;
    width: 21px;
    height: 21px;
    background-color: #2f80e2;
    border-radius: 3px;
}
.cb svg {
    display: block;
    fill: none;
    stroke: #fff;
    stroke-width: 2.4;
}
.cb.empty {
    background-color: #fff;
    border: 1px solid #999;
}

/* select bar */
.selects {
    display: flex;
    gap: 5px;
    height: 40px;
    padding-top: 4px;
    margin-left: -30px;
}
.sel {
    display: flex;
    align-items: center;
    justify-content: space-between;
    flex: none;
    width: 148px;
    height: 31px;
    padding: 0 8px 0 5px;
    background-color: #fff;
    border-radius: 5px;
}
.sel.first {
    width: 149px;
    border: 1px solid #7fb0ea;
}
.sel .caret { border-top-color: #555; }

/* main area */
.main {
    display: flex;
    position: relative;
    height: 724px;
}
.title-strip {
    height: 16px;
    margin-top: 1px;
    background-color: #e6e6e6;
    text-align: right;
}
.title-strip .x {
    display: block;
    padding-right: 5px;
    font-size: 20px;
    line-height: 16px;
    color: #aaa;
}
.nav {
    display: flex;
    flex-direction: column;
    flex: none;
    width: 227px;
    background-color: #fff;
}
.nav-head {
    height: 34px;
    margin-left: -18px;
    line-height: 34px;
    color: #777;
    background-color: #f3f3f3;
}
.nav-tools {
    display: flex;
    justify-content: flex-end;
    align-items: center;
    gap: 7px;
    height: 41px;
    padding-right: 2px;
    border-bottom: 2px solid #e6e6e6;
}
.tool-btn {
    display: flex;
    align-items: center;
    justify-content: center;
    width: 35px;
    height: 32px;
    background-color: #bcd8f5;
    border-radius: 6px;
}
.nav-list {
    position: relative;
    flex: 1;
    padding-top: 5px;
    overflow: hidden;
}
.n1, .n2 {
    display: flex;
    align-items: center;
    height: 36px;
    white-space: nowrap;
}
.n1 { padding-left: 3px; }
.n2 {
    padding-left: 32px;
    gap: 10px;
}
.n2.selected {
    width: 165px;
    height: 31px;
    margin: 2px 0 3px 29px;
    padding-left: 3px;
    background-color: #bdd7f0;
    border-radius: 4px;
}
.lock {
    width: 16px;
    height: 16px;
    margin-left: 5px;
}
.nav-scroll {
    position: absolute;
    top: 25px;
    left: 210px;
    width: 12px;
    height: 170px;
    background-color: #c8c8c8;
    border-radius: 6px;
}

/* middle column */
.mid {
    flex: none;
    width: 413px;
    margin: 0 7px;
}
.ptabs {
    display: flex;
    height: 35px;
    padding-top: 2px;
    background-color: #f3f3f3;
}
.ptabs.short { height: 33px; }
.ptab {
    width: 98px;
    line-height: 31px;
    text-align: center;
    color: #9a9a9a;
    background-color: #dedede;
    border: 1px solid #d6d6d6;
}
.ptab.on {
    font-weight: 700;
    color: #3a3a3a;
    background-color: #eeeeee;
}
.comp {
    height: 262px;
    background-color: #fff;
    border: 1px solid #dcdcdc;
}
.comp-tools {
    display: flex;
    align-items: center;
    height: 39px;
    padding-left: 6px;
    border-bottom: 2px solid #eee;
}
.comp-tools span { margin-left: 7px; }
.comp-tools .caret { margin-left: 11px; transform: scale(0.8); }
.comp-tools .copy { margin-left: 15px; }
.comp-tools .del { margin-left: 20px; }
.comp-search {
    height: 30px;
    padding-left: 3px;
    line-height: 28px;
    color: #b8b8b8;
    border-bottom: 2px solid #eee;
}
.tree { padding-top: 4px; }
.t1, .t2, .t3 {
    display: flex;
    align-items: center;
    height: 36px;
}
.tc { margin-right: 7px; }
.t1 { padding-left: 21px; }
.t2 { padding-left: 51px; }
.t3 { padding-left: 96px; }
.t3.on {
    margin: 1px 0 1px 90px;
    height: 32px;
    padding-left: 6px;
    background-color: #bdd7f0;
    border-radius: 4px 0 0 4px;
}
.title-strip.second {
    height: 18px;
    margin-top: 7px;
}
.props {
    position: relative;
    height: 352px;
    background-color: #fff;
    border-bottom: 2px solid #e2e2e2;
    overflow: hidden;
}
.prop-table {
    width: 388px;
    table-layout: fixed;
    border-collapse: collapse;
}
.c0 { width: 34px; }
.c1 { width: 212px; }
.c2 { width: 82px; }
.c3 { width: 60px; }
.prop-table tr { height: 31.600px; }
.prop-table td, .prop-table th {
    padding: 0 3px;
    font-weight: 400;
    white-space: nowrap;
    overflow: hidden;
    border: 1px solid #e2e2e2;
}
.prop-table td:nth-child(2) { padding-left: 4px; }
.prop-table td:last-child { text-align: center; }
.phead th { height: 32px; }
.pval {
    color: #fff;
    background-color: #7db8f6;
}
.num {
    text-align: center;
    background-color: #e6e6e6;
}
.prop-table .num { padding: 0; }
.link { color: #3b78f0; }
.gray { color: #a0a0a0; }
.chk {
    display: inline-block;
    width: 20px;
    height: 20px;
    vertical-align: middle;
    background-color: #fff;
    border: 1px solid #8f8f8f;
    border-radius: 3px;
}
.plus {
    display: inline-block;
    width: 18px;
    height: 18px;
    margin: 0 10px 0 1px;
    font-size: 15px;
    line-height: 15px;
    text-align: center;
    vertical-align: 1px;
    border: 1px solid #aaa;
    border-radius: 3px;
}
.prop-scroll {
    position: absolute;
    top: 218px;
    left: 396px;
    width: 12px;
    height: 111px;
    background-color: #c8c8c8;
    border-radius: 6px;
}

/* canvas */
.canvas {
    display: block;
    flex: none;
    width: 1233px;
    height: 724px;
}
.canvas path { fill: none; }
.canvas .ln-red { stroke: #c8201e; stroke-width: 2; }
.canvas .ln-red2 { stroke: #d01030; stroke-width: 2; }
.canvas .ln-red3 { stroke: #c80000; stroke-width: 2.5; }
.canvas .ln-band { stroke: #c82a14; stroke-width: 2.5; opacity: 0.65; }
.canvas .ln-dark { stroke: #500000; stroke-width: 2; }
.canvas .ln-rebar { stroke: #e01010; stroke-width: 2; }
.canvas .ln-green { stroke: #0a7a0a; stroke-width: 1.2; }
.canvas .ln-lead { stroke: #f4f4f4; stroke-width: 3; }
.canvas .ln-soft { stroke: #c4e8c4; stroke-width: 2; }
.canvas .ln-white { stroke: #d8d8d8; stroke-width: 1.5; }
.canvas .ln-gray { stroke: #a8a8a8; stroke-width: 1.3; }
.canvas .ln-dim { stroke: #858585; stroke-width: 2.5; }
.canvas .ax-y { fill: #0f0; }
.canvas .ax-x { fill: #f00; }
.cad {
    font-family: "Liberation Sans", sans-serif;
    fill: #f2f2f2;
}
.mono { font-family: "Liberation Mono", monospace; }
.axis {
    fill: none;
    stroke: #0a6a0a;
    stroke-width: 1.3;
}
.axis-y, .axis-x { font-family: "Liberation Sans", sans-serif; }
.axis-y { fill: #0c0; }
.axis-x { fill: #e00; }

/* right tools, floating over the canvas */
.view-tools {
    position: absolute;
    top: 2px;
    right: 0;
    display: flex;
    flex-direction: column;
    align-items: center;
    gap: 12px;
    width: 47px;
    height: 367px;
    padding-top: 18px;
    background-color: #fff;
    border-radius: 3px 0 0 3px;
}
.view-tools .ic {
    width: 30px;
    height: 30px;
}
.caret.vt { border-top-color: #555; }
.vt-sep {
    width: 34px;
    height: 0;
    border-top: 2px solid #a8a8a8;
}

/* status bar */
.status {
    display: flex;
    gap: 6px;
    height: 12px;
    padding: 5px 0 0 997px;
    background-color: #fafafa;
    border-top: 1px solid #d0d0d0;
}
.st-btn {
    flex: none;
    height: 10px;
    background-color: #fff;
    border: 1px solid #b4b4b4;
    border-radius: 4px 4px 0 0;
}
.st-btn.on {
    background-color: #d6e6fa;
    border-color: #6aa5ea;
}
.st-btn.gap1 { margin-left: 5px; }
.st-btn.gap1 + .st-btn.gap1 { margin-left: 4px; }
.w37 { width: 37px; }
.w53 { width: 53px; }
.w52 { width: 52px; }
.w35 { width: 35px; }

/* dialog */
.dialog {
    position: absolute;
    top: 217px;
    left: 520px;
    width: 443px;
    height: 453px;
    padding: 0 18px 0 16px;
    background:
        linear-gradient(to right, #fcfcfc 24%, rgba(252, 252, 252, 0) 33%),
        linear-gradient(#e6f4e2 0, #eeeeee 32px, #eeeeee 345px, #e8f5e0 375px, #f6f8d8 405px, #eeeeee 422px);
    border: 1px solid #c4c4c4;
    box-shadow: 0 0 3px rgba(0, 0, 0, 0.2);
}
.dlg-head {
    display: flex;
    align-items: center;
    justify-content: space-between;
    height: 56px;
    font-size: 20px;
}
.dlg-close {
    width: 15px;
    height: 15px;
    margin-right: 3px;
    fill: none;
    stroke: #777;
    stroke-width: 1.4;
}
.dlg-sec {
    display: flex;
    align-items: center;
    gap: 5px;
    height: 32px;
}
.dlg-sec::after {
    content: "";
    flex: 1;
    border-top: 1px solid #c8c8c8;
}
.dlg-sec.s2 { margin-top: 1px; }
.dlg-sec.s3 { margin-top: 7px; }
.dlg-row {
    display: flex;
    align-items: center;
    gap: 6px;
    height: 34px;
}
.dlg-row.first { margin-top: 2px; }
.dlg-row .cb { margin-left: 1px; }
.dlg-field {
    display: flex;
    align-items: center;
    justify-content: space-between;
    height: 37px;
    margin-top: 11px;
}
.dlg-field + .dlg-field { margin-top: 11px; }
.dlg-sec.s2 + .dlg-field { margin-top: 7px; }
.inp {
    width: 321px;
    height: 37px;
    padding-left: 4px;
    line-height: 35px;
    background-color: #fff;
    border: 1px solid #ddd;
    border-radius: 5px;
}
.inp.focus { border-color: #5a9ae6; }
.dlg-radios {
    display: flex;
    height: 34px;
    align-items: center;
}
.radio {
    display: flex;
    align-items: center;
    gap: 7px;
    width: 209px;
}
.rd {
    position: relative;
    flex: none;
    width: 20px;
    height: 20px;
    margin-left: 1px;
    background-color: #fff;
    border: 1px solid #9a9a9a;
    border-radius: 50%;
}
.rd.on::after {
    content: "";
    position: absolute;
    top: 4px;
    left: 4px;
    width: 10px;
    height: 10px;
    background-color: #2f80e2;
    border-radius: 50%;
}
.dlg-line {
    margin-top: 18px;
    border-top: 1px solid #c8c8c8;
}
.dlg-btns {
    display: flex;
    justify-content: space-between;
    margin-top: 21px;
}
.btn {
    width: 119px;
    height: 38px;
    line-height: 36px;
    text-align: center;
    background-color: #fff;
    border: 1px solid #dcdcdc;
    border-radius: 5px;
}
.btn.primary {
    color: #fff;
    background-color: #2f80e2;
    border-color: #2f80e2;
}

/* red marks drawn on the screenshot */
.marks {
    position: absolute;
    top: 0;
    left: 0;
    width: 1887px;
    height: 962px;
    pointer-events: none;
}
.mk { fill: none; stroke: #ef1f10; }
.mk.t4 { stroke-width: 3.5; }
.mk.t5 { stroke-width: 5; }
.mk.t6 { stroke-width: 6; }
.mkf { fill: #ef1f10; }
.mk-orange { fill: #f4622a; }
.mk-line { fill: none; stroke: #c8c8c8; stroke-width: 2; }
```
